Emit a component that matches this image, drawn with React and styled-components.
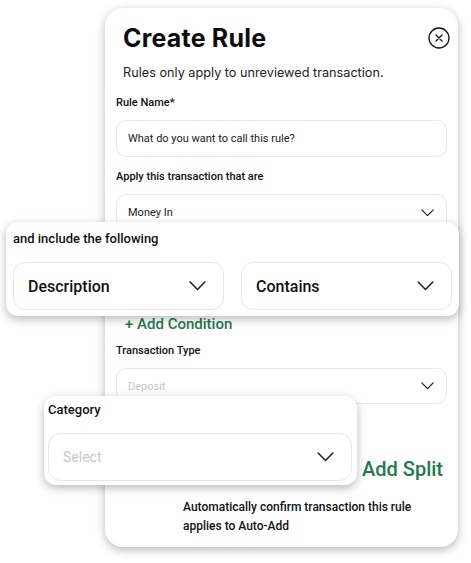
import React from "react";
import styled, { createGlobalStyle } from "styled-components";

const Global = createGlobalStyle`
  html, body { margin: 0; padding: 0; background: #ffffff; }
  body { font-family: Roboto, "Liberation Sans", sans-serif; color: #111; }
`;

const Stage = styled.div`
  position: relative;
  width: 471px;
  height: 563px;
  overflow: hidden;
`;

const Card = styled.div`
  margin: 8px 0 0 105px;
  width: 353px;
  height: 539px;
  box-sizing: border-box;
  background: #fff;
  border-radius: 18px;
  box-shadow: 0 3px 10px rgba(0, 0, 0, 0.28);
  padding: 14px 11px 0 11px;
  display: flex;
  flex-direction: column;
`;

const Header = styled.div`
  display: flex;
  align-items: center;
  justify-content: space-between;
  padding-left: 7px;
`;

const Title = styled.h1`
  margin: 0;
  font-family: Inter, "Noto Sans", sans-serif;
  font-weight: 700;
  font-size: 25px;
  line-height: 32px;
  letter-spacing: 0.2px;
  color: #0d0d0d;
`;

const CloseBtn = styled.button`
  width: 22px;
  height: 22px;
  margin-right: -3px;
  padding: 0;
  border: none;
  background: none;
  display: flex;
  align-items: center;
  justify-content: center;
`;

const Subtitle = styled.p`
  margin: 11px 0 0 7px;
  font-family: Inter, "Noto Sans", sans-serif;
  font-size: 12.7px;
  line-height: 16px;
  color: #222;
`;

const Label = styled.div`
  margin-top: ${(p) => p.$mt || 0}px;
  font-size: 11px;
  font-weight: 500;
  line-height: 14px;
  color: #111;
`;

const Field = styled.div`
  margin-top: ${(p) => p.$mt || 10}px;
  height: ${(p) => p.$h || 37}px;
  flex-shrink: 0;
  box-sizing: border-box;
  border: 1px solid #e8e8e8;
  border-radius: 10px;
  display: flex;
  align-items: center;
  justify-content: space-between;
  padding: 0 12px 0 11px;
  font-size: 11px;
  color: ${(p) => (p.$muted ? "#c4c4c4" : "#1a1a1a")};
  background: #fff;
`;

const Spacer = styled.div`
  height: ${(p) => p.$h}px;
  flex-shrink: 0;
`;

const AddCondition = styled.div`
  margin-left: 9px;
  font-size: 15px;
  font-weight: 500;
  line-height: 18px;
  color: #1f7a4c;
`;

const SplitRow = styled.div`
  display: flex;
  justify-content: flex-end;
  padding-right: 4px;
  margin-top: 53px;
`;

const AddSplit = styled.div`
  font-size: 20px;
  font-weight: 500;
  line-height: 24px;
  color: #1f7a4c;
`;

const AutoText = styled.p`
  margin: 17px 0 0 67px;
  width: 240px;
  font-size: 12px;
  font-weight: 500;
  line-height: 19px;
  color: #111;
`;

const Overlay = styled.div`
  position: absolute;
  left: ${(p) => p.$x}px;
  top: ${(p) => p.$y}px;
  width: ${(p) => p.$w}px;
  height: ${(p) => p.$h}px;
  box-sizing: border-box;
  background: #fff;
  border-radius: 12px;
  box-shadow: 0 3px 10px rgba(0, 0, 0, 0.28);
  padding: ${(p) => p.$pad};
  display: flex;
  flex-direction: column;
`;

const OverlayTitle = styled.div`
  font-size: 13px;
  font-weight: 500;
  line-height: 16px;
  color: #111;
`;

const BigSelects = styled.div`
  margin-top: 15px;
  display: grid;
  grid-template-columns: 211px 211px;
  gap: 17px;
`;

const BigSelect = styled.div`
  margin-top: ${(p) => p.$mt || 0}px;
  height: 48px;
  box-sizing: border-box;
  border: 1px solid #e8e8e8;
  border-radius: 12px;
  display: flex;
  align-items: center;
  justify-content: space-between;
  padding: 0 17px 0 14px;
  font-size: ${(p) => (p.$muted ? 14 : 16)}px;
  font-weight: ${(p) => (p.$muted ? 400 : 500)};
  color: ${(p) => (p.$muted ? "#c8c8c8" : "#111")};
`;

const Chevron = ({ w = 13 }) => (
  <svg width={w} height={w / 2 + 1} viewBox="0 0 16 9" fill="none">
    <path d="M1 1l7 7 7-7" stroke="#1a1a1a" strokeWidth="1.4" strokeLinecap="round" strokeLinejoin="round" />
  </svg>
);

export default function App() {
  return (
    <Stage>
      <Global />
      <Card>
        <Header>
          <Title>Create Rule</Title>
          <CloseBtn aria-label="close">
            <svg width="22" height="22" viewBox="0 0 22 22" fill="none">
              <circle cx="11" cy="11" r="10" stroke="#111" strokeWidth="1.3" />
              <path d="M8 8l6 6M14 8l-6 6" stroke="#111" strokeWidth="1.3" strokeLinecap="round" />
            </svg>
          </CloseBtn>
        </Header>
        <Subtitle>Rules only apply to unreviewed transaction.</Subtitle>
        <Label $mt={15}>Rule Name*</Label>
        <Field $mt={10}>What do you want to call this rule?</Field>
        <Label $mt={13}>Apply this transaction that are</Label>
        <Field $mt={10}>
          Money In
          <Chevron />
        </Field>
        <Spacer $h={84} />
        <AddCondition>+ Add Condition</AddCondition>
        <Label $mt={11}>Transaction Type</Label>
        <Field $mt={10} $h={36} $muted>
          Deposit
          <Chevron />
        </Field>
        <SplitRow>
          <AddSplit>Add Split</AddSplit>
        </SplitRow>
        <AutoText>Automatically confirm transaction this rule applies to Auto-Add</AutoText>
      </Card>

      <Overlay $x={6} $y={222} $w={453} $h={94} $pad="9px 7px 0 7px">
        <OverlayTitle>and include the following</OverlayTitle>
        <BigSelects>
          <BigSelect>
            Description
            <Chevron w={17} />
          </BigSelect>
          <BigSelect>
            Contains
            <Chevron w={17} />
          </BigSelect>
        </BigSelects>
      </Overlay>

      <Overlay $x={44} $y={396} $w={313} $h={89} $pad="6px 5px 0 4px">
        <OverlayTitle>Category</OverlayTitle>
        <BigSelect $mt={15} $muted>
          Select
          <Chevron w={17} />
        </BigSelect>
      </Overlay>
    </Stage>
  );
}
